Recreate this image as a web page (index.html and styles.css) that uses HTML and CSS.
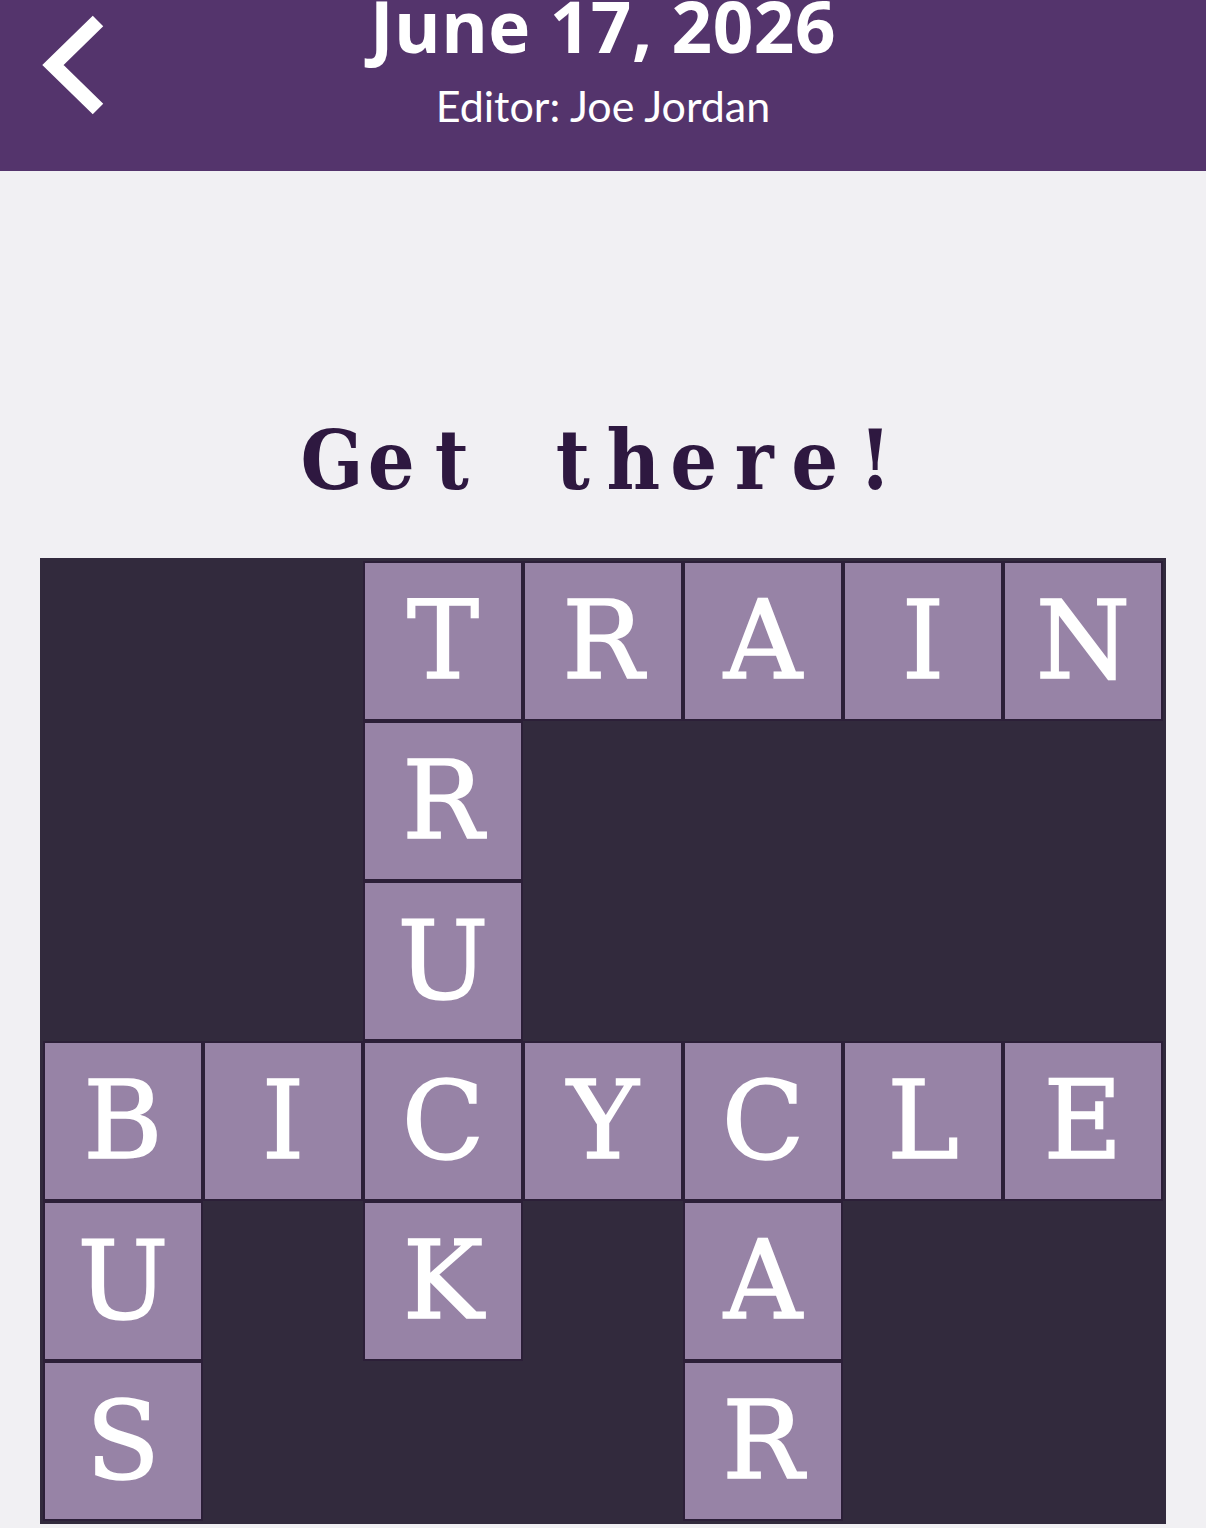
FILE: index.html
```html
<!DOCTYPE html>
<html>
<head>
<meta charset="utf-8">
<link rel="stylesheet" href="styles.css">
</head>
<body>
<header class="topbar">
  <a class="back" href="#" aria-label="Back">
    <svg width="120" height="130" viewBox="0 0 120 130">
      <polyline points="98,21 53,65 98,109" fill="none" stroke="#ffffff" stroke-width="15" stroke-linecap="butt" stroke-linejoin="miter"/>
    </svg>
  </a>
  <div class="titles">
    <div class="date">June 17, 2026</div>
    <div class="editor">Editor: Joe Jordan</div>
  </div>
</header>
<main class="content">
  <h1 class="clue"><span class="ch">G</span><span class="ch">e</span><span class="ch">t</span><span class="ch"> </span><span class="ch">t</span><span class="ch">h</span><span class="ch">e</span><span class="ch">r</span><span class="ch">e</span><span class="ch">!</span></h1>
  <div class="board">
    <div class="cell"></div><div class="cell"></div><div class="cell on">T</div><div class="cell on">R</div><div class="cell on">A</div><div class="cell on">I</div><div class="cell on">N</div>
    <div class="cell"></div><div class="cell"></div><div class="cell on">R</div><div class="cell"></div><div class="cell"></div><div class="cell"></div><div class="cell"></div>
    <div class="cell"></div><div class="cell"></div><div class="cell on">U</div><div class="cell"></div><div class="cell"></div><div class="cell"></div><div class="cell"></div>
    <div class="cell on">B</div><div class="cell on">I</div><div class="cell on">C</div><div class="cell on">Y</div><div class="cell on">C</div><div class="cell on">L</div><div class="cell on">E</div>
    <div class="cell on">U</div><div class="cell"></div><div class="cell on">K</div><div class="cell"></div><div class="cell on">A</div><div class="cell"></div><div class="cell"></div>
    <div class="cell on">S</div><div class="cell"></div><div class="cell"></div><div class="cell"></div><div class="cell on">R</div><div class="cell"></div><div class="cell"></div>
  </div>
</main>
</body>
</html>
```
FILE: styles.css
```css
html, body {
  margin: 0;
  padding: 0;
}
body {
  background: #f1f0f3;
  width: 1206px;
  height: 1528px;
  overflow: hidden;
  font-family: "Open Sans", "Liberation Sans", sans-serif;
}
.topbar {
  position: relative;
  height: 171px;
  background: #54346c;
  color: #ffffff;
  display: flex;
  justify-content: center;
  overflow: hidden;
}
.back {
  position: absolute;
  left: 0;
  top: 0;
  display: block;
}
.back svg {
  display: block;
}
.titles {
  display: flex;
  flex-direction: column;
  align-items: center;
}
.date {
  font-weight: 700;
  font-size: 71px;
  line-height: 80px;
  margin-top: -14px;
  letter-spacing: 0.5px;
}
.editor {
  font-size: 43px;
  line-height: 50px;
  margin-top: 15px;
  font-family: "Lato", "Open Sans", sans-serif;
}
.content {
  display: flex;
  flex-direction: column;
  align-items: center;
}
.clue {
  margin: 239px 0 0 0;
  height: 100px;
  line-height: 100px;
  display: flex;
  font-family: "DejaVu Serif Condensed", "DejaVu Serif", "Liberation Serif", serif;
  font-stretch: condensed;
  font-weight: 700;
  font-size: 82px;
  color: #2e1840;
}
.ch {
  width: 60.5px;
  text-align: center;
  white-space: pre;
}
.board {
  margin-top: 48px;
  box-sizing: border-box;
  width: 1126px;
  padding: 3px;
  background: #322a3d;
  display: grid;
  grid-template-columns: repeat(7, 160px);
  grid-template-rows: repeat(6, 160px);
}
.cell {
  box-sizing: border-box;
}
.cell.on {
  background: #9783a6;
  border: 2.5px solid #2c1f38;
  color: #ffffff;
  font-family: "DejaVu Serif", "Liberation Serif", serif;
  font-weight: 400;
  font-size: 108px;
  -webkit-text-stroke: 1.6px #ffffff;
  display: flex;
  align-items: center;
  justify-content: center;
  line-height: 1;
}
```
